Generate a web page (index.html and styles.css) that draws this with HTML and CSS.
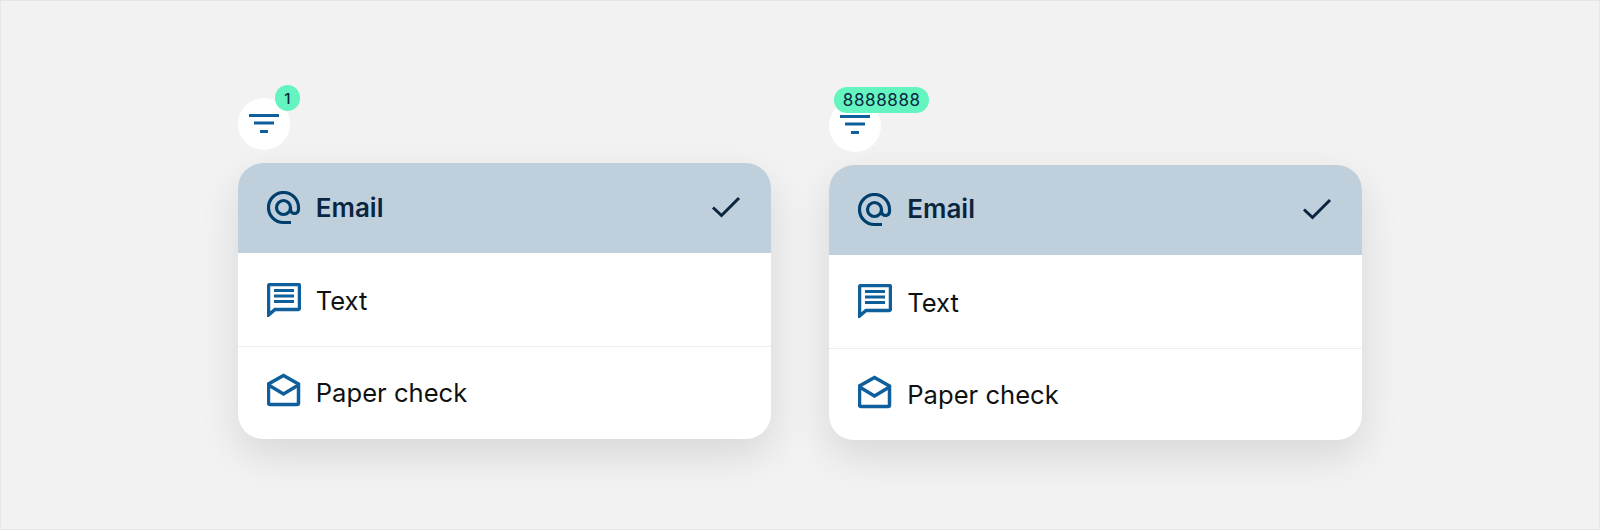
FILE: index.html
```html
<!DOCTYPE html>
<html lang="en">
    <head>
        <meta charset="UTF-8" />
        <title>Filter menu</title>
        <link rel="stylesheet" href="styles.css">
    </head>
    <body>
        <div class="page">
            <div class="group">
                <div class="filter-btn">
                    <svg class="filter-icon" viewBox="0 0 30 19"><path d="M0 1.5h30M5 9h20M11 17.5h8" /></svg>
                    <span class="badge badge-round">1</span>
                </div>
                <ul class="menu">
                    <li class="menu-item selected">
                        <svg class="icon at" viewBox="0 0 34 34"><path d="M24 31.5H16.5A15 15 0 1 1 31.5 16.5v2a4 4 0 0 1-8 0v-2" /><circle cx="16.5" cy="16.5" r="7" /></svg>
                        <span class="label">Email</span>
                        <svg class="check" viewBox="0 0 30 22"><path d="M2 11.5l8.5 8L28 2" /></svg>
                    </li>
                    <li class="menu-item item-text">
                        <svg class="icon" viewBox="0 0 34 34"><path d="M3 1.5h28A1.5 1.5 0 0 1 32.500 3v22a1.500 1.500 0 0 1-1.500 1.500H8L1.500 32V3A1.500 1.500 0 0 1 3 1.500z" /><path class="lines" d="M7 7.500h20M7 13h20M7 18.500h20" /></svg>
                        <span class="label">Text</span>
                    </li>
                    <li class="menu-item item-paper">
                        <svg class="icon" viewBox="0 0 34 34"><path d="M16.500 2.500L31.500 11v19a1.500 1.500 0 0 1-1.500 1.500H3A1.500 1.500 0 0 1 1.500 30V11z" /><path d="M1.500 12l15 9 15-9" /></svg>
                        <span class="label">Paper check</span>
                    </li>
                </ul>
            </div>

            <div class="group group-low">
                <div class="filter-btn">
                    <svg class="filter-icon" viewBox="0 0 30 19"><path d="M0 1.5h30M5 9h20M11 17.5h8" /></svg>
                    <span class="badge badge-wide">8888888</span>
                </div>
                <ul class="menu">
                    <li class="menu-item selected">
                        <svg class="icon at" viewBox="0 0 34 34"><path d="M24 31.5H16.5A15 15 0 1 1 31.5 16.5v2a4 4 0 0 1-8 0v-2" /><circle cx="16.5" cy="16.5" r="7" /></svg>
                        <span class="label">Email</span>
                        <svg class="check" viewBox="0 0 30 22"><path d="M2 11.5l8.5 8L28 2" /></svg>
                    </li>
                    <li class="menu-item item-text">
                        <svg class="icon" viewBox="0 0 34 34"><path d="M3 1.5h28A1.5 1.5 0 0 1 32.500 3v22a1.500 1.500 0 0 1-1.500 1.500H8L1.500 32V3A1.500 1.500 0 0 1 3 1.500z" /><path class="lines" d="M7 7.500h20M7 13h20M7 18.500h20" /></svg>
                        <span class="label">Text</span>
                    </li>
                    <li class="menu-item item-paper">
                        <svg class="icon" viewBox="0 0 34 34"><path d="M16.500 2.500L31.500 11v19a1.500 1.500 0 0 1-1.500 1.500H3A1.500 1.500 0 0 1 1.500 30V11z" /><path d="M1.500 12l15 9 15-9" /></svg>
                        <span class="label">Paper check</span>
                    </li>
                </ul>
            </div>
        </div>
    </body>
</html>
```
FILE: styles.css
```css
body {
    margin: 0;
    font-family: Inter, "Liberation Sans", sans-serif;
}

.page {
    box-sizing: border-box;
    width: 1600px;
    height: 530px;
    padding-top: 97px;
    display: flex;
    justify-content: center;
    gap: 58.5px;
    background: #f2f2f2;
    border: 1px solid #e6e6e6;
}

.group {
    width: 533px;
}

.group-low {
    margin-top: 1.5px;
}

.filter-btn {
    position: relative;
    width: 52px;
    height: 52px;
    margin-bottom: 13px;
    display: flex;
    align-items: center;
    justify-content: center;
    background: white;
    border-radius: 50%;
}

.filter-icon {
    width: 30px;
    height: 19px;
    margin-top: -2px;
    fill: none;
    stroke: #0f5f9c;
    stroke-width: 3;
}

.badge {
    position: absolute;
    top: -13px;
    height: 26px;
    display: flex;
    align-items: center;
    justify-content: center;
    background: #64f4c0;
    border-radius: 13px;
    color: #0a2540;
    font-size: 17px;
    font-weight: 500;
}

.badge-round {
    left: 37px;
    width: 25px;
    font-size: 15px;
}

.badge-wide {
    left: 5px;
    width: 95px;
    letter-spacing: 0.6px;
    font-weight: 400;
}

.menu {
    list-style: none;
    margin: 0;
    padding: 0;
    background: white;
    border-radius: 25px;
    overflow: hidden;
    box-shadow: 0 16px 40px rgba(0, 0, 0, 0.11);
}

.menu-item {
    height: 91.5px;
    padding: 0 30px 0 29px;
    display: flex;
    align-items: center;
    gap: 15px;
    color: #111;
    font-size: 25.6px;
}

.menu-item + .menu-item {
    border-top: 1px solid #eee;
}

.selected {
    height: 90px;
    background: #bfd0dc;
    color: #0a2540;
    font-size: 26px;
    font-weight: 600;
}

.selected .label {
    padding-bottom: 2px;
}

.selected .check {
    margin-top: -2px;
}

.selected + .menu-item {
    border-top: none;
    height: 93px;
}

.item-text .label {
    padding-top: 2px;
}

.item-paper .icon {
    margin-bottom: 5px;
}

.label {
    flex: 1;
}

.icon {
    width: 34px;
    height: 34px;
    fill: none;
    stroke: #0f5f9c;
    stroke-width: 3.5;
}

.lines {
    stroke-width: 3;
}

.at {
    stroke: #003f6b;
    stroke-width: 3.2;
}

.check {
    width: 30px;
    height: 22px;
    fill: none;
    stroke: #0a2540;
    stroke-width: 3;
}
```
